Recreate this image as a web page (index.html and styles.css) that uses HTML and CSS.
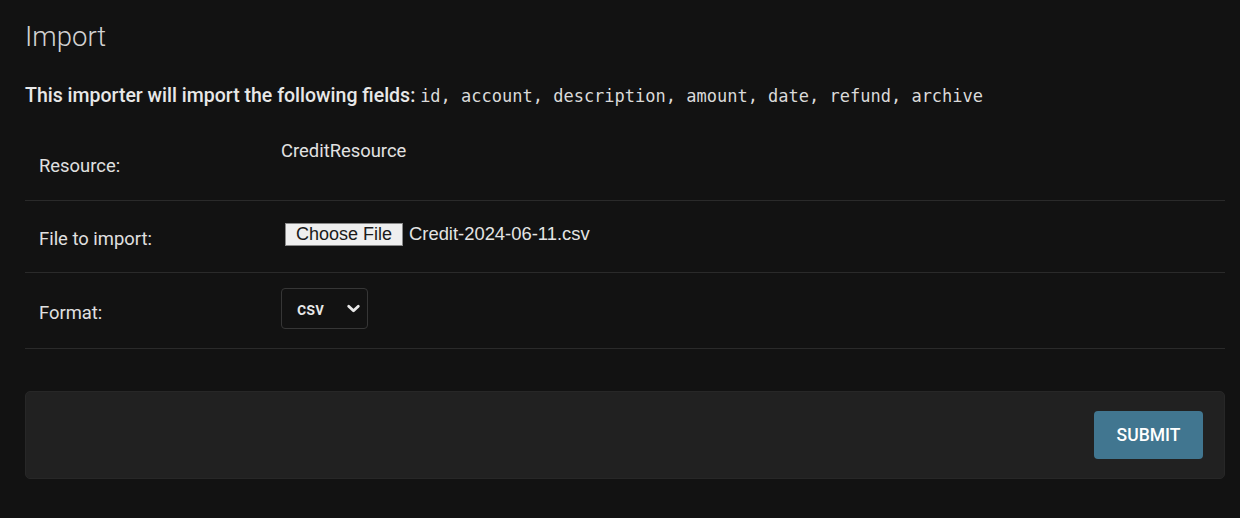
FILE: index.html
```html
<!DOCTYPE html>
<html lang="en">
<head>
    <meta charset="UTF-8">
    <meta name="viewport" content="width=device-width, initial-scale=1.0">
    <title>Import</title>
    <link rel="stylesheet" href="styles.css">
</head>
<body>
    <main id="content">
        <h1>Import</h1>

        <form id="import-form">
            <p class="help">This importer will import the following fields: <code>id, account, description, amount, date, refund, archive</code></p>

            <fieldset class="module">
                <div class="form-row">
                    <label>Resource:</label>
                    <div class="readonly">CreditResource</div>
                </div>

                <div class="form-row">
                    <label for="import-file">File to import:</label>
                    <div class="file-field" id="import-file">
                        <span class="file-button">Choose File</span>
                        <span class="file-name">Credit-2024-06-11.csv</span>
                    </div>
                </div>

                <div class="form-row">
                    <label for="format">Format:</label>
                    <div class="select" id="format">
                        <span>csv</span>
                        <svg width="14" height="14" viewBox="0 0 14 14" aria-hidden="true">
                            <path d="M2.5 4.8 L7 9.2 L11.5 4.8" fill="none" stroke="currentColor" stroke-width="2.6" stroke-linecap="round" stroke-linejoin="round"/>
                        </svg>
                    </div>
                </div>
            </fieldset>

            <div class="submit-row">
                <button type="submit" class="default">SUBMIT</button>
            </div>
        </form>
    </main>
</body>
</html>
```

FILE: styles.css
```css
body {
    font-family: Roboto, "Noto Sans", Arial, sans-serif;
    margin: 0;
    padding: 0;
    background-color: #121212;
    color: #e2e2e2;
}

#content {
    padding: 0 15px 0 25px;
}

h1 {
    margin: 0;
    padding-top: 21px;
    font-size: 27.5px;
    font-weight: 300;
    line-height: 32px;
    color: #d2d2d2;
}

.help {
    margin: 31px 0 0;
    font-size: 19.5px;
    font-weight: 500;
    line-height: 24px;
    color: #e8e8e8;
}

.help code {
    font-family: "DejaVu Sans Mono", "Liberation Mono", monospace;
    font-size: 17px;
    font-weight: 400;
    color: #dadada;
}

fieldset {
    margin: 23px 0 0;
    padding: 0;
    border: none;
}

.form-row {
    display: flex;
    align-items: center;
    border-bottom: 1px solid #2a2a2a;
    font-size: 18.4px;
}

.form-row label {
    width: 242px;
    padding-left: 14px;
    margin-top: 3px;
    color: #e0e0e0;
}

.form-row:nth-child(1) {
    height: 69px;
    align-items: flex-start;
}

.form-row:nth-child(1) label {
    margin-top: 0;
    padding-top: 24px;
}

.form-row:nth-child(1) .readonly {
    padding-top: 9px;
}

.form-row:nth-child(2) {
    height: 71px;
}

.form-row:nth-child(3) {
    height: 75px;
}

.file-field {
    display: flex;
    align-items: center;
    gap: 6px;
    padding-left: 4px;
    margin-top: -5px;
}

.file-button {
    display: inline-block;
    box-sizing: border-box;
    width: 118px;
    height: 23px;
    padding-top: 1px;
    background-color: #efefef;
    border: 1px solid #8a8a8a;
    color: #1a1a1a;
    font-family: "Liberation Sans", Arial, sans-serif;
    font-size: 18px;
    line-height: 19px;
    text-align: center;
}

.file-name {
    font-family: "Liberation Sans", Arial, sans-serif;
    font-size: 18.4px;
    color: #e4e4e4;
}

.select {
    display: flex;
    align-items: center;
    justify-content: space-between;
    box-sizing: border-box;
    width: 87px;
    height: 41px;
    margin-top: -4px;
    padding: 0 6px 0 15px;
    border: 1px solid #363636;
    border-radius: 4px;
    font-size: 17.5px;
    font-weight: 500;
    color: #e8e8e8;
}

.select svg {
    width: 15px;
    height: 15px;
}

.submit-row {
    display: flex;
    justify-content: flex-end;
    margin-top: 42px;
    padding: 19px 21px 19px;
    background-color: #212121;
    border: 1px solid #272727;
    border-radius: 5px;
}

.submit-row button {
    width: 109px;
    height: 48px;
    border: none;
    border-radius: 4px;
    background-color: #417690;
    color: white;
    font-family: Roboto, Arial, sans-serif;
    font-size: 17.5px;
    font-weight: 500;
    cursor: pointer;
}
```
